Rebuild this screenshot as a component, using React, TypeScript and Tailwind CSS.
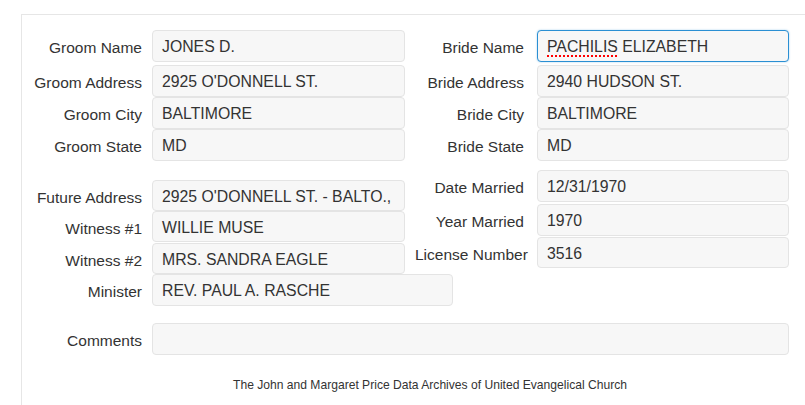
import React from "react";

const Field = ({
  value,
  className = "",
  focused = false,
  children,
}: {
  value?: string;
  className?: string;
  focused?: boolean;
  children?: React.ReactNode;
}) => (
  <div
    className={
      "flex items-center pl-[9px] pt-[2px] rounded-[4px] border bg-[#f7f7f7] text-[15.8px] text-[#333] whitespace-nowrap overflow-hidden " +
      (focused
        ? "border-[#2a8fd3] shadow-[0_0_2px_rgba(42,143,211,0.45)] "
        : "border-[#e4e4e4] ") +
      className
    }
  >
    {children ?? value}
  </div>
);

const Label = ({ text, className = "" }: { text: string; className?: string }) => (
  <div
    className={
      "flex items-center justify-end pt-[4px] text-[15.5px] text-[#333] whitespace-nowrap shrink-0 " +
      className
    }
  >
    {text}
  </div>
);

export default function App() {
  const font = { fontFamily: '"Liberation Sans", Arial, sans-serif' };
  return (
    <div className="w-[805px] h-[405px] bg-white pl-[21px] pt-[14px] overflow-hidden" style={font}>
      <div className="border-l border-t border-[#e6e6e6] h-[400px] pt-[15px]">
        {/* Section 1 */}
        <div className="flex flex-col">
          {[
            ["Groom Name", "JONES D.", "Bride Name", "PACHILIS ELIZABETH", "mb-[3px]"],
            ["Groom Address", "2925 O'DONNELL ST.", "Bride Address", "2940 HUDSON ST.", ""],
            ["Groom City", "BALTIMORE", "Bride City", "BALTIMORE", ""],
            ["Groom State", "MD", "Bride State", "MD", ""],
          ].map(([l1, v1, l2, v2, mb], i) => (
            <div key={i} className={"flex h-[32px] " + mb}>
              <Label text={l1} className="w-[120px]" />
              <Field value={v1} className="ml-[10px] w-[253px]" />
              <Label text={l2} className="ml-[10px] w-[109px]" />
              {i === 0 ? (
                <Field focused className="ml-[13px] w-[252px]">
                  <span className="underline decoration-dotted decoration-[#ff0000] decoration-[1.5px] underline-offset-[3px]">
                    PACHILIS
                  </span>
                  <span>&nbsp;ELIZABETH</span>
                </Field>
              ) : (
                <Field value={v2} className="ml-[13px] w-[252px]" />
              )}
            </div>
          ))}
        </div>

        {/* Section 2 */}
        <div className="flex">
          <div className="flex flex-col pt-[19px]">
            <div className="flex h-[31px]">
              <Label text="Future Address" className="w-[120px]" />
              <Field value="2925 O'DONNELL ST. - BALTO.," className="ml-[10px] w-[253px]" />
            </div>
            <div className="flex h-[31px]">
              <Label text="Witness #1" className="w-[120px]" />
              <Field value="WILLIE MUSE" className="ml-[10px] w-[253px]" />
            </div>
            <div className="flex h-[31px] mt-[1px]">
              <Label text="Witness #2" className="w-[120px]" />
              <Field value="MRS. SANDRA EAGLE" className="ml-[10px] w-[253px]" />
            </div>
            <div className="flex h-[32px]">
              <Label text="Minister" className="w-[120px]" />
              <Field value="REV. PAUL A. RASCHE" className="ml-[10px] w-[301px]" />
            </div>
          </div>
          <div className="flex flex-col pt-[9px] -ml-[38px]">
            <div className="flex h-[32px]">
              <Label text="Date Married" className="w-[109px]" />
              <Field value="12/31/1970" className="ml-[13px] w-[252px]" />
            </div>
            <div className="flex h-[32px] mt-[2px]">
              <Label text="Year Married" className="w-[109px]" />
              <Field value="1970" className="ml-[13px] w-[252px]" />
            </div>
            <div className="flex h-[31px] mt-[1px]">
              <Label text="License Number" className="w-[109px] justify-start" />
              <Field value="3516" className="ml-[13px] w-[252px]" />
            </div>
          </div>
        </div>

        {/* Comments */}
        <div className="flex h-[32px] mt-[17px]">
          <Label text="Comments" className="w-[120px]" />
          <Field value="" className="ml-[10px] w-[637px]" />
        </div>

        <div className="w-[860px] -ml-[22px] text-center text-[12.1px] text-[#333] mt-[21px]">
          The John and Margaret Price Data Archives of United Evangelical Church
        </div>
      </div>
    </div>
  );
}
